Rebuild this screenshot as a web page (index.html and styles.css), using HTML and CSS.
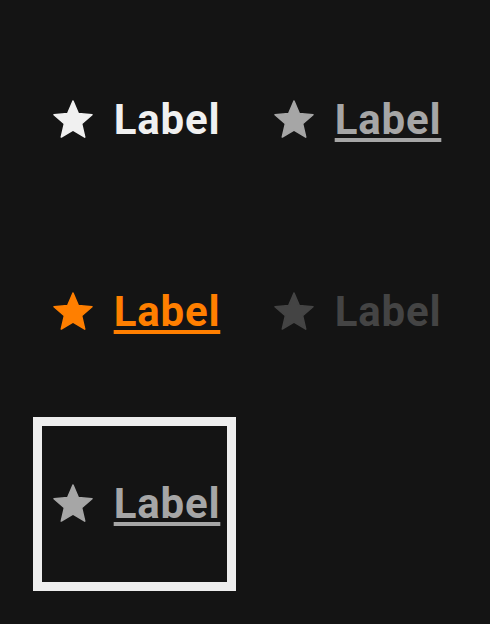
FILE: index.html
```html
<!DOCTYPE html>
<html>
<head>
<meta charset="utf-8">
<link rel="stylesheet" href="styles.css">
</head>
<body>
<div class="grid">
  <div class="cell default">
    <svg class="icon" viewBox="0 0 24 24"><path d="M12 17.27L18.18 21l-1.64-7.03L22 9.24l-7.19-.61L12 2 9.19 8.63 2 9.24l5.46 4.73L5.82 21z"/></svg>
    <span class="label">Label</span>
  </div>
  <div class="cell hover">
    <svg class="icon" viewBox="0 0 24 24"><path d="M12 17.27L18.18 21l-1.64-7.03L22 9.24l-7.19-.61L12 2 9.19 8.63 2 9.24l5.46 4.73L5.82 21z"/></svg>
    <span class="label">Label</span>
  </div>
  <div class="cell active">
    <svg class="icon" viewBox="0 0 24 24"><path d="M12 17.27L18.18 21l-1.64-7.03L22 9.24l-7.19-.61L12 2 9.19 8.63 2 9.24l5.46 4.73L5.82 21z"/></svg>
    <span class="label">Label</span>
  </div>
  <div class="cell disabled">
    <svg class="icon" viewBox="0 0 24 24"><path d="M12 17.27L18.18 21l-1.64-7.03L22 9.24l-7.19-.61L12 2 9.19 8.63 2 9.24l5.46 4.73L5.82 21z"/></svg>
    <span class="label">Label</span>
  </div>
  <div class="cell focus">
    <svg class="icon" viewBox="0 0 24 24"><path d="M12 17.27L18.18 21l-1.64-7.03L22 9.24l-7.19-.61L12 2 9.19 8.63 2 9.24l5.46 4.73L5.82 21z"/></svg>
    <span class="label">Label</span>
  </div>
</div>
</body>
</html>
```
FILE: styles.css
```css
html, body {
  margin: 0;
  padding: 0;
  background: #141414;
}
body {
  width: 490px;
  height: 624px;
  overflow: hidden;
  font-family: Roboto, "Liberation Sans", sans-serif;
}
.grid {
  display: grid;
  grid-template-columns: 185px 185px;
  grid-auto-rows: 156px;
  column-gap: 36px;
  row-gap: 36px;
  padding: 42px;
}
.cell {
  display: flex;
  align-items: center;
  justify-content: center;
  gap: 17px;
  color: #f0f0f0;
}
.icon {
  width: 48px;
  height: 48px;
  flex: none;
}
.icon path {
  fill: currentColor;
  stroke: currentColor;
  stroke-width: 0.8;
  stroke-linejoin: round;
  transform: scale(0.95);
  transform-origin: 12px 12px;
}
.label {
  font-size: 42px;
  font-weight: 700;
  letter-spacing: 0.8px;
  line-height: 1;
  text-underline-offset: 4px;
  text-decoration-thickness: 2px;
}
.hover, .focus {
  color: #a6a6a6;
}
.hover .label, .focus .label, .active .label {
  text-decoration: underline;
}
.active {
  color: #ff7f00;
}
.disabled {
  color: #444444;
}
.focus {
  outline: 9px solid #eeeeee;
}
```
